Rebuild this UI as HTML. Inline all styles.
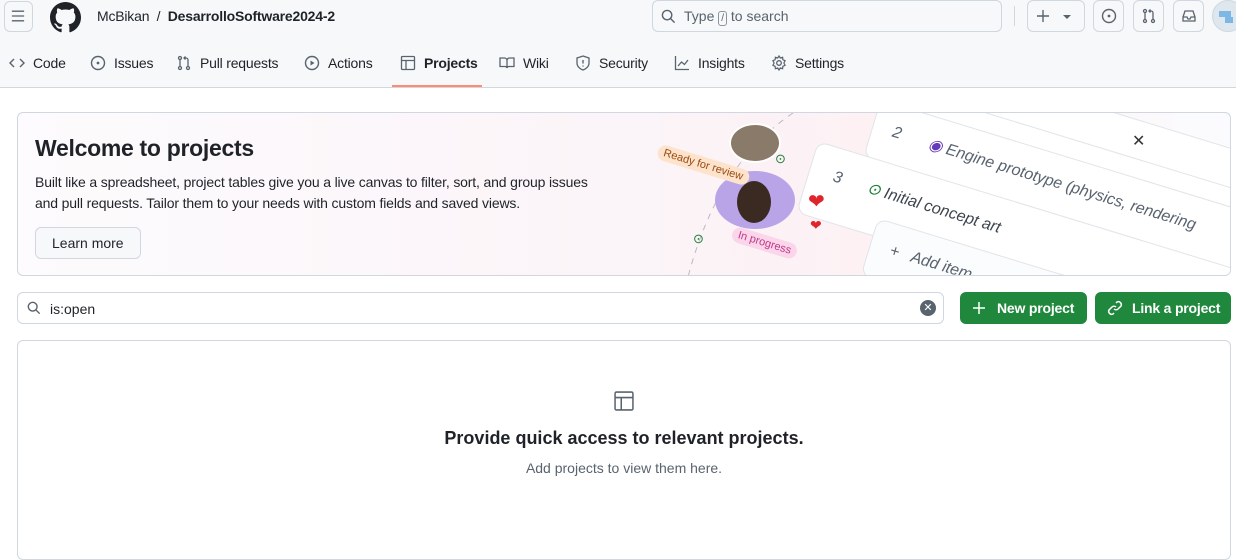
<!DOCTYPE html>
<html><head><meta charset="utf-8">
<style>
*{box-sizing:border-box;margin:0;padding:0}
body{width:1236px;height:533px;overflow:hidden;background:#fff;font-family:"Liberation Sans",sans-serif;color:#1f2328;position:relative}
.hdr{position:absolute;left:0;top:0;width:1236px;height:88px;background:#f6f8fa;border-bottom:1px solid #d0d7de}
.btn{position:absolute;border:1px solid #d0d7de;border-radius:6px;background:#f6f8fa}
.ab{position:absolute}
.nav{position:absolute;top:55px;font-size:14px;color:#1f2328;display:flex;align-items:center;gap:8px;letter-spacing:-0.2px}
svg{display:block}
.card{position:absolute;left:17px;top:112px;width:1214px;height:164px;border:1px solid #d0d7de;border-radius:6px;overflow:hidden;background:linear-gradient(90deg,#fdfbfd 0%,#fbf4f8 50%,#fdf1f4 70%,#fbfbfd 100%)}
.row{position:absolute;background:#fff;border:1px solid #e1e4e8;border-radius:10px;transform-origin:0 0;transform:rotate(17deg);height:60px;font-size:16px;color:#59636e;font-style:italic}
</style></head><body>
<div class="hdr">
 <div class="btn" style="left:4px;top:1px;width:29px;height:31px"></div>
 <svg class="ab" style="left:11px;top:9px" width="14" height="14" viewBox="0 0 16 16"><path d="M1 2.5h14M1 8h14M1 13.5h14" stroke="#59636e" stroke-width="1.5"/></svg>
 <svg class="ab" style="left:50px;top:2px" width="31" height="31" viewBox="0 0 16 16"><path fill="#1f2328" d="M8 0C3.580 0 0 3.58 0 8c0 3.54 2.290 6.53 5.47 7.59.4.07.55-.17.55-.38 0-.19-.01-.82-.01-1.49-2.01.37-2.53-.49-2.690-.94-.09-.23-.48-.94-.82-1.13-.28-.15-.68-.52-.01-.53.63-.01 1.08.58 1.23.82.72 1.21 1.87.87 2.330.66.07-.52.28-.87.51-1.07-1.78-.2-3.64-.89-3.64-3.95 0-.87.31-1.59.82-2.15-.08-.2-.36-1.02.08-2.12 0 0 .67-.21 2.2.82.64-.18 1.32-.27 2-.27.68 0 1.36.09 2 .27 1.53-1.04 2.2-.82 2.2-.82.44 1.1.16 1.92.08 2.12.51.56.82 1.27.82 2.15 0 3.07-1.87 3.75-3.65 3.95.29.25.54.73.54 1.48 0 1.070-.01 1.93-.01 2.2 0 .21.15.46.55.38A8.013 8.013 0 0016 8c0-4.42-3.58-8-8-8z"/></svg>
 <div class="ab" style="left:97px;top:8px;font-size:14px;color:#1f2328;letter-spacing:-0.2px">McBikan&nbsp;&nbsp;/&nbsp;&nbsp;<b style="font-weight:600">DesarrolloSoftware2024-2</b></div>
 <div class="btn" style="left:652px;top:0px;width:350px;height:32px;background:#f6f8fa"></div>
 <svg class="ab" style="left:661px;top:9px" width="15" height="15" viewBox="0 0 16 16"><circle cx="6.5" cy="6.5" r="5" fill="none" stroke="#59636e" stroke-width="1.5"/><path d="M10 10l4.5 4.5" stroke="#59636e" stroke-width="1.5"/></svg>
 <div class="ab" style="left:684px;top:8px;font-size:14px;color:#59636e">Type <span style="display:inline-block;border:1px solid #8c959f;border-radius:3px;font-size:10px;padding:0 2px;line-height:13px">/</span> to search</div>
 <div class="ab" style="left:1014px;top:6px;width:1px;height:20px;background:#d0d7de"></div>
 <div class="btn" style="left:1027px;top:0px;width:58px;height:32px"></div>
 <svg class="ab" style="left:1036px;top:9px" width="14" height="14" viewBox="0 0 14 14"><path d="M7 1v12M1 7h12" stroke="#59636e" stroke-width="1.4"/></svg>
 <div class="ab" style="left:1063px;top:15px;border:4px solid transparent;border-top-color:#59636e"></div>
 <div class="btn" style="left:1093px;top:0px;width:31px;height:32px"></div>
 <svg class="ab" style="left:1101px;top:8px" width="16" height="16" viewBox="0 0 16 16"><circle cx="8" cy="8" r="6.5" fill="none" stroke="#59636e" stroke-width="1.4"/><circle cx="8" cy="8" r="1.4" fill="#59636e"/></svg>
 <div class="btn" style="left:1133px;top:0px;width:31px;height:32px"></div>
 <svg class="ab" style="left:1141px;top:8px" width="16" height="16" viewBox="0 0 16 16"><g fill="none" stroke="#59636e" stroke-width="1.3"><circle cx="4" cy="3" r="1.5"/><circle cx="4" cy="13" r="1.5"/><circle cx="12" cy="13" r="1.5"/><path d="M4 4.5v7M12 11.5V5a2 2 0 0 0-2-2H8M9.5 1.5L8 3l1.5 1.5"/></g></svg>
 <div class="btn" style="left:1173px;top:0px;width:31px;height:32px"></div>
 <svg class="ab" style="left:1181px;top:8px" width="16" height="16" viewBox="0 0 16 16"><path d="M2 9l2-6h8l2 6v4H2zM2 9h4l1 2h2l1-2h4" fill="none" stroke="#59636e" stroke-width="1.3"/></svg>
 <div class="ab" style="left:1212px;top:0px;width:32px;height:32px;border-radius:50%;background:#dfe7ee;border:1px solid #d0d7de;overflow:hidden"><div style="position:absolute;left:6px;top:10px;width:12px;height:6px;background:#7db7e3"></div><div style="position:absolute;left:12px;top:16px;width:8px;height:6px;background:#7db7e3"></div></div>

 <div class="nav" style="left:9px"><svg width="16" height="16" viewBox="0 0 16 16"><path d="M5 4L1 8l4 4M11 4l4 4-4 4" fill="none" stroke="#59636e" stroke-width="1.4"/></svg>Code</div>
 <div class="nav" style="left:90px"><svg width="16" height="16" viewBox="0 0 16 16"><circle cx="8" cy="8" r="6.5" fill="none" stroke="#59636e" stroke-width="1.4"/><circle cx="8" cy="8" r="1.4" fill="#59636e"/></svg>Issues</div>
 <div class="nav" style="left:176px"><svg width="16" height="16" viewBox="0 0 16 16"><g fill="none" stroke="#59636e" stroke-width="1.3"><circle cx="4" cy="3" r="1.5"/><circle cx="4" cy="13" r="1.5"/><circle cx="12" cy="13" r="1.5"/><path d="M4 4.5v7M12 11.5V5a2 2 0 0 0-2-2H8M9.5 1.5L8 3l1.5 1.5"/></g></svg>Pull requests</div>
 <div class="nav" style="left:304px"><svg width="16" height="16" viewBox="0 0 16 16"><circle cx="8" cy="8" r="6.5" fill="none" stroke="#59636e" stroke-width="1.4"/><path d="M6.5 5.5v5l4-2.5z" fill="#59636e"/></svg>Actions</div>
 <div class="nav" style="left:400px;font-weight:600"><svg width="16" height="16" viewBox="0 0 16 16"><rect x="1.5" y="1.5" width="13" height="13" rx="1" fill="none" stroke="#59636e" stroke-width="1.3"/><path d="M1.5 5.5h13M6 5.5v9" stroke="#59636e" stroke-width="1.3"/></svg>Projects</div>
 <div class="ab" style="left:392px;top:85px;width:90px;height:2px;background:#fd8c73"></div>
 <div class="nav" style="left:499px"><svg width="16" height="16" viewBox="0 0 16 16"><path d="M1 3h4.5A2.5 2.5 0 0 1 8 5.5V13a2 2 0 0 0-2-1.5H1zM15 3h-4.5A2.5 2.5 0 0 0 8 5.5V13a2 2 0 0 1 2-1.5h5z" fill="none" stroke="#59636e" stroke-width="1.3"/></svg>Wiki</div>
 <div class="nav" style="left:575px"><svg width="16" height="16" viewBox="0 0 16 16"><path d="M8 1l6 2v5c0 3.5-3 6-6 7-3-1-6-3.5-6-7V3z" fill="none" stroke="#59636e" stroke-width="1.3"/><path d="M8 5v3.5M8 10.5v1" stroke="#59636e" stroke-width="1.4"/></svg>Security</div>
 <div class="nav" style="left:674px"><svg width="16" height="16" viewBox="0 0 16 16"><path d="M1.5 1v13.5H15M4 11l3.5-4 3 2.5L14 5" fill="none" stroke="#59636e" stroke-width="1.3"/></svg>Insights</div>
 <div class="nav" style="left:771px"><svg width="16" height="16" viewBox="0 0 16 16"><circle cx="8" cy="8" r="2.3" fill="none" stroke="#59636e" stroke-width="1.3"/><path d="M8 1l1.3 2 2.3-.7.3 2.4 2.2 1-1.2 2.3 1.2 2.3-2.2 1-.3 2.4-2.3-.7L8 15l-1.3-2-2.3.7-.3-2.4-2.2-1 1.2-2.3L1.9 5.7l2.2-1 .3-2.4 2.3.7z" fill="none" stroke="#59636e" stroke-width="1.2"/></svg>Settings</div>
</div>

<div class="card">
 <div class="ab" style="left:17px;top:22px;font-size:23px;font-weight:600;letter-spacing:-0.3px">Welcome to projects</div>
 <div class="ab" style="left:17px;top:59px;font-size:14px;line-height:21px;width:572px;letter-spacing:-0.15px">Built like a spreadsheet, project tables give you a live canvas to filter, sort, and group issues and pull requests. Tailor them to your needs with custom fields and saved views.</div>
 <div class="btn" style="left:17px;top:114px;width:106px;height:32px;font-size:14px;font-weight:500;padding:7px 0 0 16px">Learn more</div>
 <svg class="ab" style="left:640px;top:0" width="140" height="164"><path d="M135 0Q60 50 30 164" fill="none" stroke="#b8bcc3" stroke-dasharray="6 6"/></svg>
 <div class="row" style="left:968px;top:-40px;width:300px"></div>
 <div class="row" style="left:872px;top:-30px;width:420px"><span style="position:absolute;left:35px;top:14px">1</span></div>
 <div class="row" style="left:920px;top:4px;width:400px;transform:rotate(17deg) translate(-60px,0)"><span style="position:absolute;left:20px;top:18px">2</span><span style="position:absolute;left:58px;top:17px;color:#59636e"><span style="color:#6639ba">◉</span> Engine prototype (physics, rendering</span></div>
 <div class="row" style="left:800px;top:28px;width:460px;height:75px"><span style="position:absolute;left:24px;top:20px">3</span><span style="position:absolute;left:60px;top:19px;color:#3d444d"><span style="color:#1a7f37">⊙</span> Initial concept art</span></div>
 <div class="row" style="left:860px;top:105px;width:400px;height:60px;background:#fbfcfd"><span style="position:absolute;left:20px;top:18px">+ &nbsp; Add item</span></div>
 <div class="ab" style="left:1114px;top:18px;font-size:16px;color:#333">✕</div>
 <div class="ab" style="left:711px;top:10px;border-radius:50%;background:#8a7a6a;border:2px solid #fff;width:52px;height:40px"></div>
 <div class="ab" style="left:697px;top:58px;width:80px;height:58px;border-radius:50%;background:#b9a4e8"><div style="position:absolute;left:22px;top:10px;width:34px;height:42px;border-radius:50%;background:#3a2a22"></div></div>
 <div class="ab" style="left:638px;top:44px;font-size:11px;color:#9a4a10;background:#fde3cb;border-radius:8px;padding:2px 6px;transform:rotate(17deg)">Ready for review</div>
 <div class="ab" style="left:713px;top:122px;font-size:11px;color:#bf3989;background:#fbd5ea;border-radius:8px;padding:2px 6px;transform:rotate(17deg)">In progress</div>
 <div class="ab" style="left:790px;top:76px;font-size:20px;color:#e0242b">❤</div>
 <div class="ab" style="left:792px;top:104px;font-size:14px;color:#e0242b">❤</div>
 <div class="ab" style="left:757px;top:38px;font-size:13px;color:#1a7f37">⊙</div>
 <div class="ab" style="left:675px;top:118px;font-size:13px;color:#1a7f37">⊙</div>
</div>

<div class="ab" style="left:17px;top:292px;width:927px;height:32px;border:1px solid #d0d7de;border-radius:6px"></div>
<svg class="ab" style="left:27px;top:301px" width="14" height="14" viewBox="0 0 16 16"><circle cx="6.5" cy="6.5" r="5" fill="none" stroke="#59636e" stroke-width="1.6"/><path d="M10 10l4.5 4.5" stroke="#59636e" stroke-width="1.6"/></svg>
<div class="ab" style="left:50px;top:301px;font-size:14px">is:open</div>
<div class="ab" style="left:920px;top:300px;width:16px;height:16px;border-radius:50%;background:#59636e;color:#fff;font-size:11px;text-align:center;line-height:16px">✕</div>
<div class="ab" style="left:960px;top:292px;width:127px;height:32px;background:#1f883d;border-radius:6px;color:#fff;font-size:14px;font-weight:600;padding:8px 0 0 37px;letter-spacing:-0.2px">New project</div>
<svg class="ab" style="left:972px;top:301px" width="14" height="14" viewBox="0 0 14 14"><path d="M7 1v12M1 7h12" stroke="#fff" stroke-width="1.5"/></svg>
<div class="ab" style="left:1095px;top:292px;width:136px;height:32px;background:#1f883d;border-radius:6px;color:#fff;font-size:14px;font-weight:600;padding:8px 0 0 37px;letter-spacing:-0.2px">Link a project</div>
<svg class="ab" style="left:1107px;top:300px" width="16" height="16" viewBox="0 0 16 16"><path d="M7 9a3 3 0 0 0 4 0l3-3a3 3 0 0 0-4-4L9 3M9 7a3 3 0 0 0-4 0L2 10a3 3 0 0 0 4 4l1-1" fill="none" stroke="#fff" stroke-width="1.5"/></svg>

<div class="ab" style="left:17px;top:340px;width:1214px;height:220px;border:1px solid #d0d7de;border-radius:6px"></div>
<svg class="ab" style="left:613px;top:390px" width="22" height="22" viewBox="0 0 16 16"><rect x="1.5" y="1.5" width="13" height="13" rx="1" fill="none" stroke="#59636e" stroke-width="1.1"/><path d="M1.5 5.5h13M6 5.5v9" stroke="#59636e" stroke-width="1.1"/></svg>
<div class="ab" style="left:0;width:1248px;top:428px;text-align:center;font-size:18px;font-weight:600">Provide quick access to relevant projects.</div>
<div class="ab" style="left:0;width:1248px;top:460px;text-align:center;font-size:14px;color:#59636e">Add projects to view them here.</div>
</body></html>
